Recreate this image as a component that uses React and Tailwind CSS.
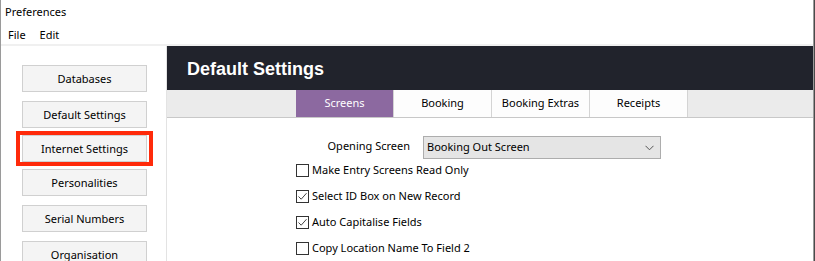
import React from "react";

const ui = { fontFamily: '"Noto Sans", "Open Sans", sans-serif' };

function SideButton({ label, highlighted }) {
  const btn = (
    <div className="w-[125px] h-[27px] flex items-center justify-center bg-[#f4f4f4] border border-[#d0d0d0] text-[11px] text-black leading-none">
      {label}
    </div>
  );
  if (highlighted) {
    return (
      <div className="ml-[15px] -my-[6px] w-[137px] h-[39px] border-[4px] border-[#ff2a0a] flex items-center justify-center">
        {btn}
      </div>
    );
  }
  return <div className="ml-[21px]">{btn}</div>;
}

function Check({ checked, label }) {
  return (
    <div className="flex items-center h-[26px]">
      <div className="w-[13px] h-[13px] border border-[#333] bg-white flex items-center justify-center">
        {checked && (
          <svg width="11" height="11" viewBox="0 0 11 11">
            <path d="M1.5 5.5 L4.2 8.2 L9.5 2.2" fill="none" stroke="#444" strokeWidth="1" />
          </svg>
        )}
      </div>
      <span className="ml-[3px] text-[11px] text-black">{label}</span>
    </div>
  );
}

export default function App() {
  const tabs = ["Screens", "Booking", "Booking Extras", "Receipts"];
  return (
    <div className="w-[815px] h-[261px] overflow-hidden bg-[#4a4a4a] flex" style={ui}>
      <div className="w-[814px] h-full bg-white border-l border-r border-[#9a9a9a] flex flex-col">
        <div className="h-[24px] flex items-center pl-[4px] text-[11px] text-black">Preferences</div>
        <div className="h-[20px] flex items-center pt-[2px] text-[11px] text-black">
          <span className="ml-[7px]">File</span>
          <span className="ml-[14px]">Edit</span>
        </div>
        <div className="h-[2px] bg-[#f0f0f0]" />
        <div className="flex flex-1 min-h-0">
          <div className="w-[166px] border-r border-[#e3e3e3] pt-[19px] flex flex-col gap-[9px]">
            <SideButton label="Databases" />
            <SideButton label="Default Settings" />
            <SideButton label="Internet Settings" highlighted />
            <SideButton label="Personalities" />
            <SideButton label="Serial Numbers" />
            <SideButton label="Organisation" />
          </div>
          <div className="flex-1 flex flex-col">
            <div className="h-[50px] bg-[#21232c] flex items-center pl-[20px]">
              <span className="text-white font-bold text-[18px] pt-[2px]" style={{ fontFamily: '"Liberation Sans", Arial, sans-serif' }}>
                Default Settings
              </span>
            </div>
            <div className="h-[28px] bg-[#ebebeb] border-b border-[#c8c8c8] flex items-end pl-[129px]">
              {tabs.map((t, i) => (
                <div
                  key={t}
                  className={
                    i === 0
                      ? "w-[98px] h-[27px] flex items-center justify-center bg-[#8c69a0] text-white text-[11px] border-r border-[#d4d4d4]"
                      : "w-[98px] h-[27px] flex items-center justify-center bg-[#fdfdfd] text-black text-[11px] border-r border-[#d4d4d4]"
                  }
                >
                  {t}
                </div>
              ))}
            </div>
            <div className="pl-[129px]">
              <div className="flex items-center mt-[18px] h-[23px]">
                <span className="w-[114px] text-right text-[11px] text-black -mt-[3px]">Opening Screen</span>
                <div className="ml-[13px] w-[238px] h-[23px] bg-[#e5e5e5] border border-[#adadad] flex items-center justify-between pl-[3px] pr-[6px] text-[11px] text-black">
                  <span>Booking Out Screen</span>
                  <svg width="9" height="6" viewBox="0 0 9 6">
                    <path d="M0.5 0.8 L4.5 4.8 L8.5 0.8" fill="none" stroke="#555" strokeWidth="1" />
                  </svg>
                </div>
              </div>
              <div className="flex flex-col -mt-[2px]">
                <Check label="Make Entry Screens Read Only" />
                <Check checked label="Select ID Box on New Record" />
                <Check checked label="Auto Capitalise Fields" />
                <Check label="Copy Location Name To Field 2" />
              </div>
            </div>
          </div>
        </div>
      </div>
    </div>
  );
}
